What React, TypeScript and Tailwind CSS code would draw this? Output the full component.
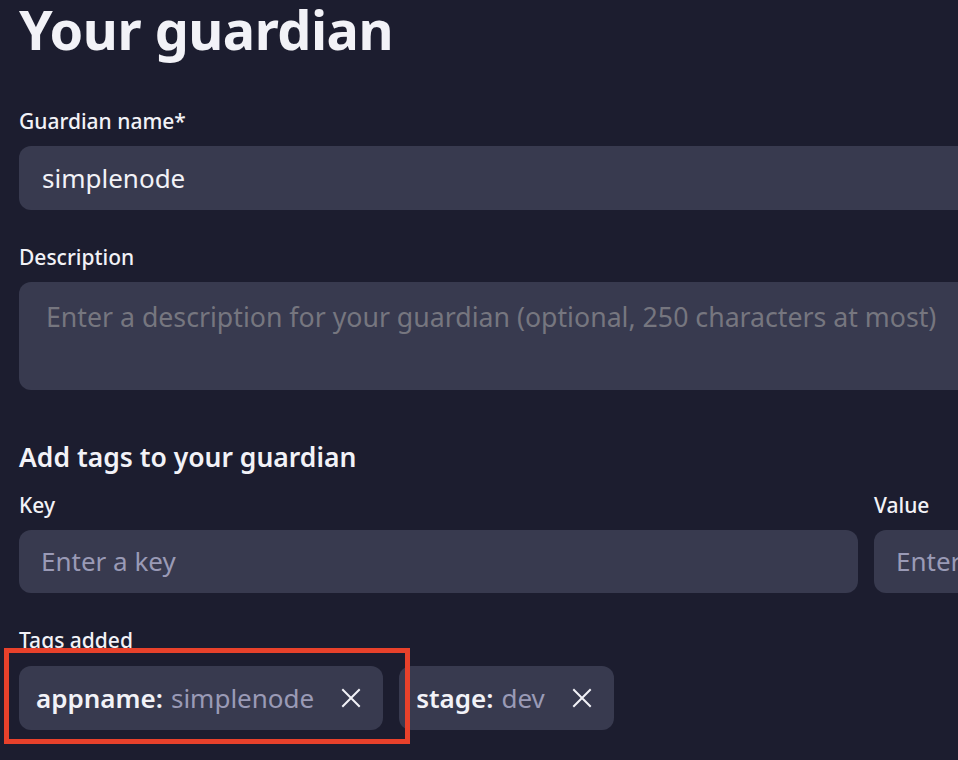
import React from "react";

const font = { fontFamily: '"Noto Sans", "Open Sans", sans-serif' };

function XIcon() {
  return (
    <svg width="20" height="20" viewBox="0 0 20 20" fill="none" stroke="#f2f2f7" strokeWidth="2" strokeLinecap="square">
      <path d="M2 2 L18 18 M18 2 L2 18" />
    </svg>
  );
}

function Chip({ k, v }: { k: string; v: string }) {
  return (
    <div className="flex h-[64px] items-center rounded-[12px] bg-[#383a4f] pl-[17px] pr-[22px]">
      <span className="text-[26px] font-semibold text-[#f2f2f7]">{k}:</span>
      <span className="ml-[8px] text-[26px] text-[#9a9ab6]">{v}</span>
      <span className="ml-[27px] flex items-center">
        <XIcon />
      </span>
    </div>
  );
}

export default function App() {
  return (
    <div className="h-[760px] w-[958px] overflow-hidden bg-[#1c1d2f]" style={font}>
      <div className="w-[1713px] pl-[19px]">
        <h1 className="mt-[-3px] text-[54px] font-bold leading-[64px] tracking-[-0.5px] text-[#f2f2f7]">Your guardian</h1>
        <div className="mt-[46px] text-[21px] font-medium leading-[28px] text-[#f2f2f7]">Guardian name*</div>
        <div className="mt-[11px] flex h-[64px] items-center rounded-[12px] bg-[#383a4f] px-[23px] text-[26px] text-[#f2f2f7]">
          simplenode
        </div>
        <div className="mt-[33px] text-[21px] font-medium leading-[28px] text-[#f2f2f7]">Description</div>
        <div className="mt-[11px] h-[108px] rounded-[12px] bg-[#383a4f] px-[27px] pt-[18px] text-[26.7px] leading-[34px] text-[#76767f]">
          Enter a description for your guardian (optional, 250 characters at most)
        </div>
        <div className="mt-[51px] text-[26.5px] font-semibold leading-[32px] text-[#f2f2f7]">Add tags to your guardian</div>
        <div className="mt-[18px] grid grid-cols-2 gap-x-[16px]">
          <div>
            <div className="text-[21px] font-medium leading-[28px] text-[#f2f2f7]">Key</div>
            <div className="mt-[11px] flex h-[63px] items-center rounded-[12px] bg-[#383a4f] px-[22px] text-[26px] text-[#9a9ab6]">
              Enter a key
            </div>
          </div>
          <div>
            <div className="text-[21px] font-medium leading-[28px] text-[#f2f2f7]">Value</div>
            <div className="mt-[11px] flex h-[63px] items-center rounded-[12px] bg-[#383a4f] px-[22px] text-[26px] text-[#9a9ab6]">
              Enter a value
            </div>
          </div>
        </div>
        <div className="mt-[33px] text-[21px] font-medium leading-[28px] text-[#f2f2f7]">Tags added</div>
        <div className="mt-[12px] flex gap-[16px]">
          <div className="relative">
            <Chip k="appname" v="simplenode" />
            <div className="pointer-events-none absolute left-[-15px] top-[-18px] h-[96px] w-[406px] border-[5px] border-[#e8412b]" />
          </div>
          <Chip k="stage" v="dev" />
        </div>
      </div>
    </div>
  );
}
